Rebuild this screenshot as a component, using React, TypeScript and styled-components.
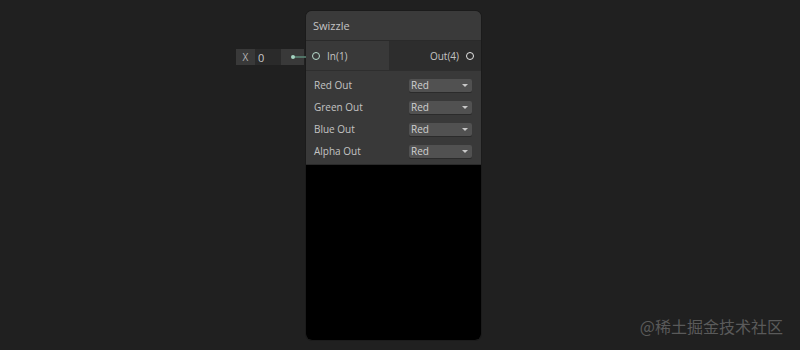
import React from "react";
import styled, { createGlobalStyle } from "styled-components";

const Global = createGlobalStyle`
  html, body { margin: 0; padding: 0; background: #202020; }
  body { width: 800px; height: 350px; overflow: hidden; font-family: "Open Sans", "DejaVu Sans", sans-serif; }
  * { box-sizing: border-box; }
`;

const Canvas = styled.div`
  position: relative;
  width: 800px;
  height: 350px;
  padding: 11px 0 0 236px;
  display: flex;
  align-items: flex-start;
  background: #202020;
`;

const InputWire = styled.div`
  margin-top: 38px;
  display: flex;
  align-items: center;
  height: 16px;
`;

const FieldLabel = styled.div`
  width: 19px;
  height: 16px;
  background: #393939;
  color: #b4b4b4;
  font-size: 10px;
  display: flex;
  align-items: center;
  justify-content: center;
`;

const FieldValue = styled.div`
  width: 26px;
  height: 16px;
  padding-left: 3px;
  background: #2a2a2a;
  color: #c8c8c8;
  font-size: 11px;
  display: flex;
  align-items: center;
`;

const DotBox = styled.div`
  width: 23px;
  height: 16px;
  background: #393939;
  position: relative;
`;

const WireSvg = styled.svg`
  position: absolute;
  left: 9px;
  top: 0;
  overflow: visible;
`;

const Node = styled.div`
  margin-left: 2px;
  width: 175px;
  height: 329px;
  border-radius: 6px;
  overflow: hidden;
  background: #393939;
  display: flex;
  flex-direction: column;
  box-shadow: 0 0 0 1px #1b1b1b;
`;

const Title = styled.div`
  height: 30px;
  padding-left: 7px;
  display: flex;
  align-items: center;
  color: #c4c4c4;
  font-size: 11px;
  background: #3a3a3a;
  border-bottom: 1px solid #2a2a2a;
`;

const PortRow = styled.div`
  height: 30px;
  display: flex;
  border-bottom: 1px solid #2e2e2e;
  position: relative;
`;

const PortSide = styled.div<{ $out?: boolean }>`
  flex: ${(p) => (p.$out ? "0 0 92px" : "1")};
  display: flex;
  align-items: center;
  justify-content: ${(p) => (p.$out ? "flex-end" : "flex-start")};
  gap: 7px;
  padding: ${(p) => (p.$out ? "0 7px 0 0" : "0 0 0 6px")};
  background: ${(p) => (p.$out ? "#2d2d2d" : "#393939")};
  color: #c4c4c4;
  font-size: 10px;
`;

const Port = styled.span<{ $color: string }>`
  width: 8px;
  height: 8px;
  border-radius: 50%;
  border: 1.5px solid ${(p) => p.$color};
  display: inline-block;
`;

const Settings = styled.div`
  padding: 3px 9px 2px 8px;
  display: flex;
  flex-direction: column;
  background: #393939;
  border-bottom: 1px solid #2a2a2a;
`;

const Row = styled.div`
  height: 22px;
  display: flex;
  align-items: center;
  justify-content: space-between;
  color: #c4c4c4;
  font-size: 10px;
`;

const Dropdown = styled.div`
  width: 63px;
  height: 13px;
  background: #515151;
  border-radius: 2px;
  padding: 0 4px 0 2px;
  display: flex;
  align-items: center;
  justify-content: space-between;
  color: #d0d0d0;
  font-size: 10px;
  box-shadow: 0 1px 0 #2b2b2b;
`;

const Caret = styled.span`
  width: 0;
  height: 0;
  border-left: 3px solid transparent;
  border-right: 3px solid transparent;
  border-top: 3px solid #c8c8c8;
`;

const Preview = styled.div`
  flex: 1;
  background: #000;
`;

const Watermark = styled.div`
  position: absolute;
  right: 17px;
  bottom: 12px;
  color: #5a5a5a;
  font-size: 16px;
  font-family: "Noto Sans CJK SC", "Noto Sans", sans-serif;
`;

const channels = ["Red Out", "Green Out", "Blue Out", "Alpha Out"];

export default function App() {
  return (
    <>
      <Global />
      <Canvas>
        <InputWire>
          <FieldLabel>X</FieldLabel>
          <FieldValue>0</FieldValue>
          <DotBox>
            <WireSvg width="30" height="16" viewBox="0 0 30 16">
              <line x1="3" y1="8" x2="23" y2="8" stroke="#5c8a78" strokeWidth="1.5" />
              <circle cx="3" cy="8" r="2" fill="#a6d4c2" />
            </WireSvg>
          </DotBox>
        </InputWire>
        <Node>
          <Title>Swizzle</Title>
          <PortRow>
            <PortSide>
              <Port $color="#b8dccd" />
              In(1)
            </PortSide>
            <PortSide $out>
              Out(4)
              <Port $color="#e6e6e6" />
            </PortSide>
          </PortRow>
          <Settings>
            {channels.map((c) => (
              <Row key={c}>
                {c}
                <Dropdown>
                  Red
                  <Caret />
                </Dropdown>
              </Row>
            ))}
          </Settings>
          <Preview />
        </Node>
        <Watermark>@稀土掘金技术社区</Watermark>
      </Canvas>
    </>
  );
}
